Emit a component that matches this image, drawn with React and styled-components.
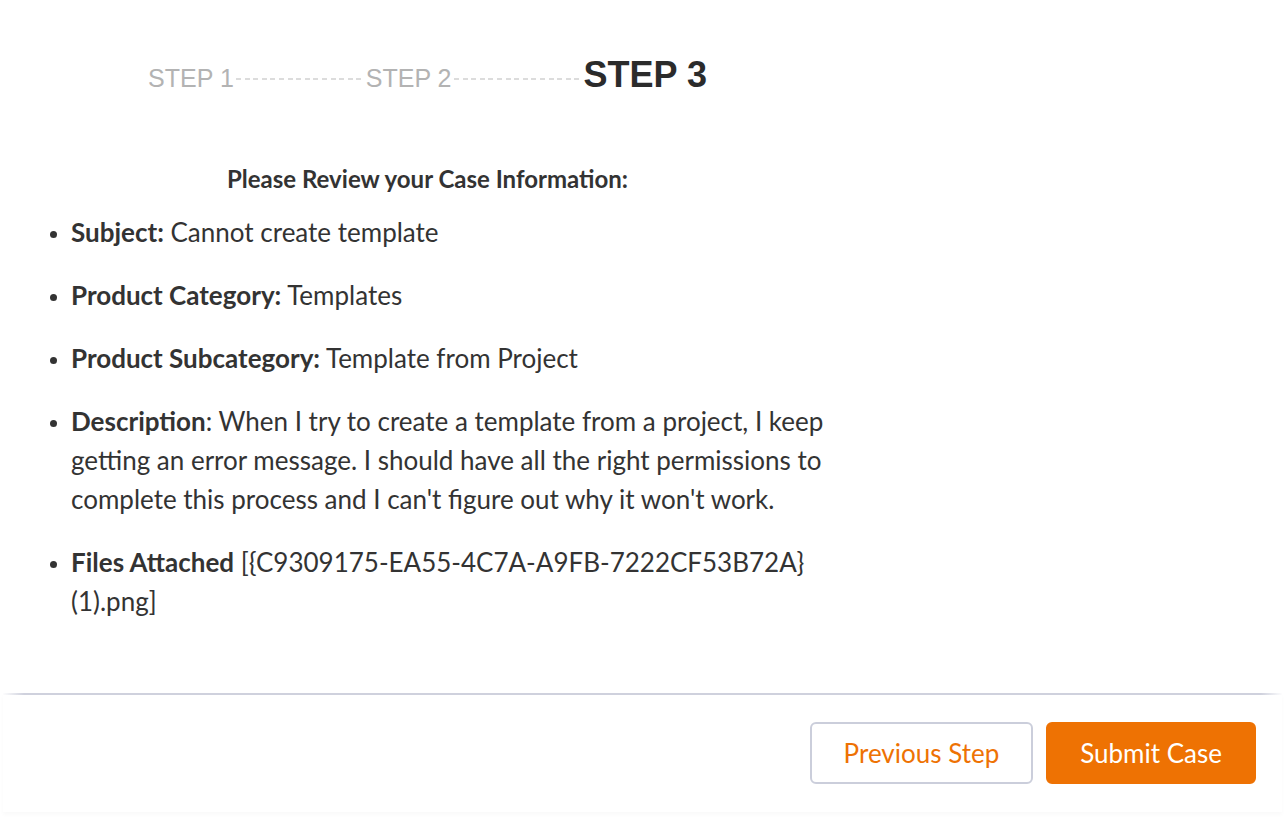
import React from "react";
import styled, { createGlobalStyle } from "styled-components";

const Global = createGlobalStyle`
  html, body { margin: 0; padding: 0; background: #fff; }
  body { font-family: Lato, "Open Sans", sans-serif; color: #333; }
`;

const Page = styled.div`
  width: 1285px;
  min-height: 823px;
  display: flex;
  flex-direction: column;
`;

const Content = styled.div`
  width: 855px;
  display: flex;
  flex-direction: column;
  align-items: center;
  padding-top: 57px;
  height: 693px;
  box-sizing: border-box;
`;

const Steps = styled.div`
  display: flex;
  align-items: baseline;
  font-family: "Liberation Sans", Arial, sans-serif;
  line-height: 1;
`;

const StepLabel = styled.span`
  font-size: ${(p) => (p.$active ? "36px" : "25px")};
  font-weight: ${(p) => (p.$active ? 700 : 400)};
  color: ${(p) => (p.$active ? "#2b2b2b" : "#b3b3b3")};
`;

const Dash = styled.span`
  display: block;
  width: 128px;
  height: 9px;
  margin: 0 2px;
  background-image: repeating-linear-gradient(
    to right,
    #dcdcdc 0,
    #dcdcdc 5px,
    transparent 5px,
    transparent 8.6px
  );
  background-size: 100% 2px;
  background-repeat: no-repeat;
  background-position: left top;
`;

const Heading = styled.h2`
  margin: 71px 0 0;
  font-size: 24px;
  line-height: 29px;
  font-weight: 700;
  color: #333;
`;

const List = styled.ul`
  align-self: stretch;
  margin: 20px 0 0;
  padding: 0 12px 0 71px;
  list-style: disc;
`;

const Item = styled.li`
  font-size: 26px;
  line-height: 39px;
  margin-bottom: 24px;
  &::marker { font-size: 21px; }
`;

const Label = styled.b`
  font-weight: 700;
`;

const Footer = styled.div`
  margin: 0 3px;
  display: flex;
  justify-content: flex-end;
  gap: 13px;
  padding: 27px 26px 28px 0;
  border-top: 2px solid #cfd1dd;
  border-image: linear-gradient(
      to right,
      rgba(207, 209, 221, 0) 0,
      #cfd1dd 22px,
      #cfd1dd calc(100% - 22px),
      rgba(207, 209, 221, 0) 100%
    )
    1;
  box-shadow: 0 3px 4px rgba(0, 0, 0, 0.025);
`;

const Button = styled.button`
  height: 62px;
  padding: 0 32px;
  border-radius: 6px;
  font-family: Lato, sans-serif;
  font-size: 26px;
  cursor: pointer;
  border: 2px solid ${(p) => (p.$primary ? "#ee7203" : "#cbcedb")};
  background: ${(p) => (p.$primary ? "#ee7203" : "#fff")};
  color: ${(p) => (p.$primary ? "#fff" : "#ee7203")};
`;

export default function App() {
  return (
    <Page>
      <Global />
      <Content>
        <Steps>
          <StepLabel>STEP 1</StepLabel>
          <Dash />
          <StepLabel>STEP 2</StepLabel>
          <Dash />
          <StepLabel $active>STEP 3</StepLabel>
        </Steps>
        <Heading>Please Review your Case Information:</Heading>
        <List>
          <Item>
            <Label>Subject:</Label> Cannot create template
          </Item>
          <Item>
            <Label>Product Category:</Label> Templates
          </Item>
          <Item>
            <Label>Product Subcategory:</Label> Template from Project
          </Item>
          <Item>
            <Label>Description</Label>: When I try to create a template from a project, I keep
            getting an error message. I should have all the right permissions to complete this
            process and I can't figure out why it won't work.
          </Item>
          <Item>
            <Label>Files Attached</Label> [{"{C9309175-EA55-4C7A-A9FB-7222CF53B72A}"} (1).png]
          </Item>
        </List>
      </Content>
      <Footer>
        <Button>Previous Step</Button>
        <Button $primary>Submit Case</Button>
      </Footer>
    </Page>
  );
}
